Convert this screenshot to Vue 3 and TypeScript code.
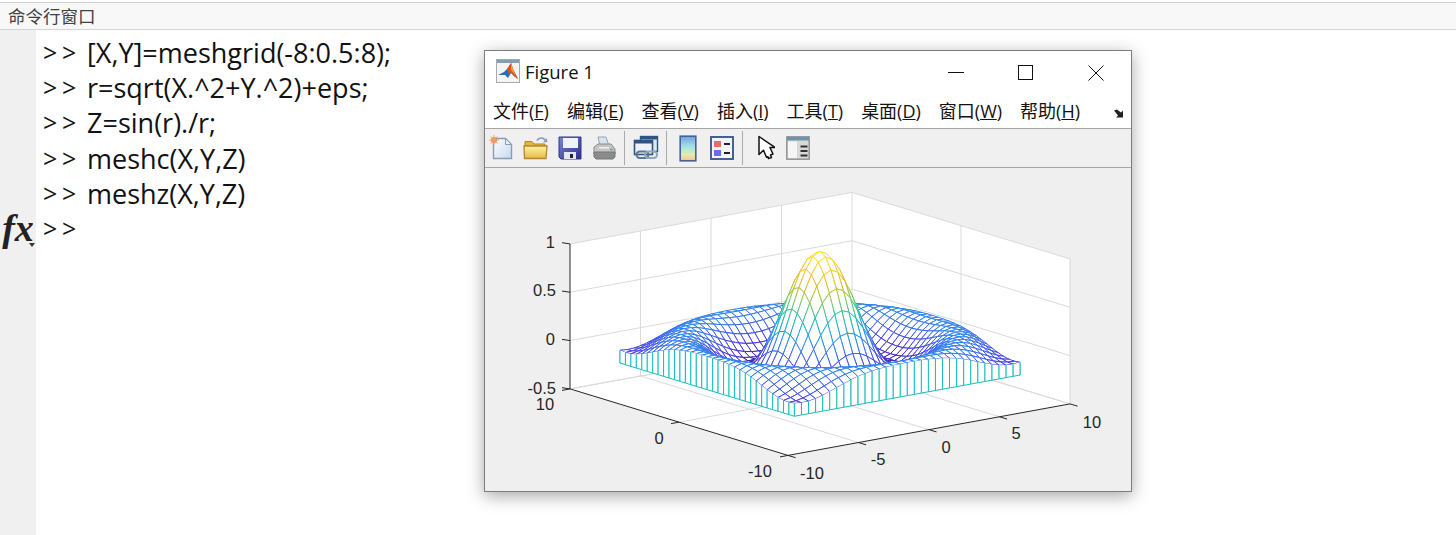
<script setup lang="ts">
type Shape = { d: string; fill: string; stroke: string };
type Pt = [number, number];

const P = (x: number, y: number, z: number): Pt => [
  788 + ((x + 10) / 20) * 282 + ((y + 10) / 20) * -218,
  455.4 + ((x + 10) / 20) * -51.5 + ((y + 10) / 20) * -66.5 - ((z + 0.5) / 1.5) * 145,
];
const f2 = (p: Pt) => `${p[0].toFixed(2)} ${p[1].toFixed(2)}`;
const line = (a: Pt, b: Pt) => `M${f2(a)}L${f2(b)}`;

const stops: [number, number, number, number][] = [
  [0, 62, 38, 168],
  [0.1, 68, 56, 232],
  [0.25, 52, 118, 242],
  [0.375, 24, 165, 222],
  [0.5, 40, 192, 170],
  [0.625, 129, 204, 89],
  [0.75, 220, 189, 41],
  [0.875, 252, 200, 48],
  [1, 249, 240, 21],
];
const ZMIN = -0.2172;
function colour(z: number): string {
  const t = Math.max(0, Math.min(1, (z - ZMIN) / (1 - ZMIN)));
  for (let i = 1; i < stops.length; i++) {
    if (t <= stops[i][0]) {
      const a = stops[i - 1];
      const b = stops[i];
      const k = (t - a[0]) / (b[0] - a[0]);
      return `rgb(${Math.round(a[1] + (b[1] - a[1]) * k)},${Math.round(a[2] + (b[2] - a[2]) * k)},${Math.round(a[3] + (b[3] - a[3]) * k)})`;
    }
  }
  return "rgb(249,240,21)";
}
const Z = (x: number, y: number) => {
  const r = Math.sqrt(x * x + y * y) + 2.22e-16;
  return Math.sin(r) / r;
};

const TEAL = "rgb(22,190,190)";
const shapes: Shape[] = [];
const edge = (x1: number, y1: number, x2: number, y2: number) => {
  const z1 = Z(x1, y1);
  const z2 = Z(x2, y2);
  const n = Math.abs(z1 - z2) > 0.06 ? 4 : Math.abs(z1 - z2) > 0.02 ? 2 : 1;
  for (let i = 0; i < n; i++) {
    const a = i / n;
    const b = (i + 1) / n;
    const za = z1 + (z2 - z1) * a;
    const zb = z1 + (z2 - z1) * b;
    shapes.push({
      d: line(P(x1 + (x2 - x1) * a, y1 + (y2 - y1) * a, za), P(x1 + (x2 - x1) * b, y1 + (y2 - y1) * b, zb)),
      fill: "none",
      stroke: colour((za + zb) / 2),
    });
  }
};
const curtain = (x1: number, y1: number, x2: number, y2: number) => {
  const a = P(x1, y1, Z(x1, y1));
  const b = P(x2, y2, Z(x2, y2));
  const c = P(x2, y2, ZMIN);
  const d = P(x1, y1, ZMIN);
  shapes.push({ d: `M${f2(a)}L${f2(b)}L${f2(c)}L${f2(d)}Z`, fill: "#fff", stroke: "none" });
  shapes.push({ d: line(a, d), fill: "none", stroke: TEAL });
  shapes.push({ d: line(b, c), fill: "none", stroke: TEAL });
  shapes.push({ d: line(d, c), fill: "none", stroke: TEAL });
};
const STEP = 0.5;
for (let v = 8; v > -8; v -= STEP) {
  curtain(8, v, 8, v - STEP);
  curtain(v, 8, v - STEP, 8);
}
for (let x = 8; x > -8; x -= STEP) {
  for (let y = 8; y > -8; y -= STEP) {
    const a = P(x, y, Z(x, y));
    const b = P(x - STEP, y, Z(x - STEP, y));
    const c = P(x - STEP, y - STEP, Z(x - STEP, y - STEP));
    const d = P(x, y - STEP, Z(x, y - STEP));
    shapes.push({ d: `M${f2(a)}L${f2(b)}L${f2(c)}L${f2(d)}Z`, fill: "#fff", stroke: "none" });
    edge(x, y, x - STEP, y);
    edge(x, y, x, y - STEP);
    edge(x - STEP, y, x - STEP, y - STEP);
    edge(x, y - STEP, x - STEP, y - STEP);
  }
}
for (let v = 8; v > -8; v -= STEP) {
  curtain(-8, v, -8, v - STEP);
  curtain(v, -8, v - STEP, -8);
}

const panes: string[] = [
  [P(-10, -10, -0.5), P(10, -10, -0.5), P(10, 10, -0.5), P(-10, 10, -0.5)],
  [P(-10, 10, -0.5), P(10, 10, -0.5), P(10, 10, 1), P(-10, 10, 1)],
  [P(10, 10, -0.5), P(10, -10, -0.5), P(10, -10, 1), P(10, 10, 1)],
].map((q) => q.map(f2).join(" "));

const gridLines: string[] = [];
for (const z of [-0.5, 0, 0.5, 1]) {
  gridLines.push(line(P(-10, 10, z), P(10, 10, z)));
  gridLines.push(line(P(10, 10, z), P(10, -10, z)));
}
for (const x of [-5, 0, 5, 10]) {
  gridLines.push(line(P(x, 10, -0.5), P(x, 10, 1)));
  gridLines.push(line(P(x, -10, -0.5), P(x, 10, -0.5)));
}
gridLines.push(line(P(10, 0, -0.5), P(10, 0, 1)));
gridLines.push(line(P(-10, 0, -0.5), P(10, 0, -0.5)));
gridLines.push(line(P(-10, 10, -0.5), P(10, 10, -0.5)));
gridLines.push(line(P(10, -10, -0.5), P(10, -10, 1)));

const axisLines: string[] = [
  line(P(-10, 10, -0.5), P(-10, 10, 1)),
  line(P(-10, 10, -0.5), P(-10, -10, -0.5)),
  line(P(-10, -10, -0.5), P(10, -10, -0.5)),
];
for (const z of [-0.5, 0, 0.5, 1]) {
  const p = P(-10, 10, z);
  axisLines.push(line(p, [p[0] - 8, p[1] - 1.2]));
}
for (const x of [-10, -5, 0, 5, 10]) {
  const p = P(x, -10, -0.5);
  axisLines.push(line(p, [p[0] + 7.6, p[1] + 2.3]));
}
for (const y of [-10, 0, 10]) {
  const p = P(-10, y, -0.5);
  axisLines.push(line(p, [p[0] - 8, p[1] + 1.5]));
}

const labels = [
  { t: "1", x: 555, y: 248, a: "end" },
  { t: "0.5", x: 556, y: 296, a: "end" },
  { t: "0", x: 555, y: 345, a: "end" },
  { t: "-0.5", x: 556, y: 394, a: "end" },
  { t: "10", x: 545, y: 410, a: "middle" },
  { t: "0", x: 659, y: 444, a: "middle" },
  { t: "-10", x: 760, y: 477, a: "middle" },
  { t: "-10", x: 812, y: 479, a: "middle" },
  { t: "-5", x: 878, y: 465, a: "middle" },
  { t: "0", x: 946, y: 453, a: "middle" },
  { t: "5", x: 1016, y: 439, a: "middle" },
  { t: "10", x: 1092, y: 428, a: "middle" },
];

const commands = [
  "[X,Y]=meshgrid(-8:0.5:8);",
  "r=sqrt(X.^2+Y.^2)+eps;",
  "Z=sin(r)./r;",
  "meshc(X,Y,Z)",
  "meshz(X,Y,Z)",
  "",
];
const menus = [
  { n: "文件", k: "F" },
  { n: "编辑", k: "E" },
  { n: "查看", k: "V" },
  { n: "插入", k: "I" },
  { n: "工具", k: "T" },
  { n: "桌面", k: "D" },
  { n: "窗口", k: "W" },
  { n: "帮助", k: "H" },
];
</script>

<template>
  <div class="page">
    <header class="cmd-title">命令行窗口</header>
    <main class="cmd-body">
      <aside class="gutter">
        <span class="fx">fx</span>
        <span class="fx-caret"></span>
      </aside>
      <section class="console">
        <div v-for="(c, i) in commands" :key="i" class="cmd-line">
          <span class="prompt"><span>&gt;</span><span>&gt;</span></span>
          <span class="code">{{ c }}</span>
        </div>
      </section>
    </main>

    <div class="figure-window">
      <div class="titlebar">
        <svg class="app-icon" width="24" height="24" viewBox="0 0 24 24">
          <rect x="0.5" y="0.5" width="23" height="23" fill="#f4f4f4" stroke="#a9a9a9" />
          <rect x="1" y="1" width="22" height="3" fill="#7d9fb8" />
          <path d="M2 16l6-3 4-4 3-5 2 6 5 10-4-3-3-3-3 5-3-3z" fill="#2a6fb5" />
          <path d="M11 10l4-6 2 6 5 10-4-3-3-4-2 3z" fill="#d9541e" />
          <path d="M15 4l2 6 3 7-5-6z" fill="#f0a030" />
        </svg>
        <span class="fig-name">Figure 1</span>
        <div class="win-controls">
          <svg class="wc" width="46" height="40" viewBox="0 0 46 40"><path d="M16 21.500h16" stroke="#111" fill="none" /></svg>
          <svg class="wc" width="46" height="40" viewBox="0 0 46 40"><rect x="15.500" y="14.500" width="14" height="14" stroke="#111" fill="none" /></svg>
          <svg class="wc" width="46" height="40" viewBox="0 0 46 40"><path d="M14.500 14.500l15 15M29.500 14.500l-15 15" stroke="#111" fill="none" /></svg>
        </div>
      </div>
      <nav class="menubar">
        <span v-for="m in menus" :key="m.k" class="menu-item">{{ m.n }}(<u>{{ m.k }}</u>)</span>
        <svg class="menu-more" width="12" height="10" viewBox="0 0 12 10">
          <path d="M1 1.500l3-1 4 3 2-2v7H3l2-2z" fill="#222" />
        </svg>
      </nav>
      <div class="toolbar">
        <button class="tool" type="button" aria-label="new">
          <svg width="26" height="26" viewBox="0 0 26 26">
            <defs>
              <linearGradient id="pg" x1="0" y1="0" x2="1" y2="1"><stop offset="0" stop-color="#fff" /><stop offset="1" stop-color="#c5d9ee" /></linearGradient>
            </defs>
            <path d="M4.500 3.500h12l6 6v14h-18z" fill="url(#pg)" stroke="#8b9cb8" stroke-width="1.400" />
            <path d="M16.500 3.500v6h6z" fill="#e8eef6" stroke="#8b9cb8" />
            <circle cx="5" cy="5" r="3" fill="#ee8a4a" />
            <path d="M5 0v10M0 5h10M1.500 1.500l7 7M8.500 1.500l-7 7" stroke="#f2a26a" stroke-width="1" />
          </svg>
        </button>
        <button class="tool" type="button" aria-label="open">
          <svg width="26" height="26" viewBox="0 0 26 26">
            <defs>
              <linearGradient id="fo" x1="0" y1="0" x2="0" y2="1"><stop offset="0" stop-color="#fff3a8" /><stop offset="1" stop-color="#e8b93e" /></linearGradient>
            </defs>
            <path d="M2 9V6.500h7l2 2.500h11v3H2z" fill="#e2b63c" stroke="#b3872a" />
            <path d="M1.500 23.500L1 11h23l-1 12.500z" fill="url(#fo)" stroke="#b3872a" stroke-width="1.300" />
            <path d="M14 5.500c2-3 6-3.500 8-.5" fill="none" stroke="#7f9ab8" stroke-width="1.600" />
            <path d="M20 7.500l4.500-.5-1-4z" fill="#7f9ab8" />
          </svg>
        </button>
        <button class="tool" type="button" aria-label="save">
          <svg width="26" height="26" viewBox="0 0 26 26">
            <defs>
              <linearGradient id="fl" x1="0" y1="0" x2="1" y2="1"><stop offset="0" stop-color="#7b84d8" /><stop offset="1" stop-color="#2c2f8c" /></linearGradient>
            </defs>
            <path d="M2 2h22v22H4l-2-2z" fill="url(#fl)" stroke="#30358a" />
            <rect x="6" y="3" width="15" height="10" fill="#eef2fa" />
            <rect x="7" y="17" width="12" height="7" fill="#e4e6f0" />
            <rect x="13" y="19" width="3" height="4" fill="#222" />
          </svg>
        </button>
        <button class="tool" type="button" aria-label="print">
          <svg width="26" height="26" viewBox="0 0 26 26">
            <path d="M7 2h8l3 9H9z" fill="#d6e4f2" stroke="#9aa4ad" />
            <path d="M3 12l4-3h13l4 5v5H3z" fill="#c4c4c4" stroke="#8a8a8a" />
            <path d="M3 17h21v5l-2 2H5l-2-2z" fill="#8c8c8c" stroke="#777" />
            <path d="M8 12h10v1.500H8z" fill="#efefef" />
            <path d="M19 14.500h3" stroke="#69b06a" stroke-width="1.400" />
          </svg>
        </button>
        <i class="tool-sep"></i>
        <button class="tool" type="button" aria-label="link">
          <svg width="26" height="26" viewBox="0 0 26 26">
            <rect x="7.500" y="1.500" width="17" height="15" fill="#dfe7f2" stroke="#2e5486" stroke-width="1.400" />
            <rect x="7.500" y="1.500" width="17" height="3" fill="#2e5486" />
            <rect x="1.500" y="5.500" width="18" height="14" fill="#eef2f8" stroke="#2e5486" stroke-width="1.600" />
            <rect x="1.500" y="5.500" width="18" height="3" fill="#2e5486" />
            <rect x="3.500" y="16.500" width="12" height="6.500" rx="3.200" fill="none" stroke="#5a7690" stroke-width="2" />
            <rect x="12" y="16.500" width="12" height="6.500" rx="3.200" fill="none" stroke="#8ea6bc" stroke-width="2" />
          </svg>
        </button>
        <i class="tool-sep"></i>
        <button class="tool" type="button" aria-label="colorbar">
          <svg width="18" height="27" viewBox="0 0 18 27">
            <defs>
              <linearGradient id="cb" x1="0" y1="0" x2="0" y2="1"><stop offset="0" stop-color="#6f9fe4" /><stop offset="0.4" stop-color="#9fe0e4" /><stop offset="0.75" stop-color="#e2ecb4" /><stop offset="1" stop-color="#f4c48c" /></linearGradient>
            </defs>
            <rect x="1.200" y="1.200" width="15.600" height="24.600" fill="url(#cb)" stroke="#4a6090" stroke-width="1.600" />
          </svg>
        </button>
        <button class="tool" type="button" aria-label="legend">
          <svg width="24" height="24" viewBox="0 0 24 24">
            <rect x="1" y="1" width="22" height="22" fill="#f2f4f8" stroke="#33508a" stroke-width="1.800" />
            <rect x="4" y="5" width="7" height="6" fill="#ec6a6a" />
            <rect x="4" y="14" width="7" height="6" fill="#6a6ee6" />
            <path d="M14 8h6M14 17h6" stroke="#222" stroke-width="2" />
          </svg>
        </button>
        <i class="tool-sep sep-wide"></i>
        <button class="tool tool-narrow" type="button" aria-label="pointer">
          <svg width="18" height="26" viewBox="0 0 18 26">
            <path d="M2 1.500v18l4.500-4.200 3 7 1.500-.6.500 1.800 3-1-1-2.500 2.500-1-3-6.500h5z" fill="#fff" stroke="#111" stroke-width="1.500" stroke-linejoin="round" />
          </svg>
        </button>
        <button class="tool tool-narrow" type="button" aria-label="panel">
          <svg width="24" height="24" viewBox="0 0 24 24">
            <rect x="0.800" y="0.800" width="22.400" height="22.400" fill="#d8d8d8" stroke="#8a8a8a" stroke-width="1.300" />
            <rect x="1" y="1" width="22" height="3.500" fill="#6f92ad" />
            <rect x="2" y="5.500" width="9" height="16.500" fill="#f6f6f6" />
            <path d="M14.500 10.500h7M14.500 15h7M14.500 19.500h7" stroke="#333" stroke-width="2" />
          </svg>
        </button>
      </div>
      <div class="figure-area">
        <svg class="plot" width="646" height="323" viewBox="485 168 646 323">
          <polygon v-for="(p, i) in panes" :key="'p' + i" :points="p" fill="#fff" />
          <path v-for="(d, i) in gridLines" :key="'g' + i" :d="d" stroke="#dadada" stroke-width="1" fill="none" />
          <path v-for="(s, i) in shapes" :key="'s' + i" :d="s.d" :fill="s.fill" :stroke="s.stroke" stroke-width="1" />
          <path v-for="(d, i) in axisLines" :key="'a' + i" :d="d" stroke="#262626" stroke-width="1" fill="none" />
          <text v-for="(l, i) in labels" :key="'t' + i" :x="l.x" :y="l.y" :text-anchor="l.a" class="tick">{{ l.t }}</text>
        </svg>
      </div>
    </div>
  </div>
</template>

<style scoped>
.page {
  position: relative;
  width: 1456px;
  height: 535px;
  overflow: hidden;
  background: #fff;
  display: flex;
  flex-direction: column;
  font-family: "Noto Sans CJK SC", sans-serif;
}
.cmd-title {
  box-sizing: border-box;
  height: 28px;
  margin-top: 2px;
  border-top: 1px solid #d0d0d0;
  border-bottom: 1px solid #d4d4d4;
  background: #f8f8f8;
  padding-left: 8px;
  font-size: 17.5px;
  line-height: 26px;
  color: #404040;
  flex: none;
}
.cmd-body {
  flex: 1;
  display: flex;
  min-height: 0;
}
.gutter {
  width: 36px;
  flex: none;
  background: #f0f0f0;
  position: relative;
  padding-top: 176px;
  text-align: center;
}
.fx {
  display: block;
  font-family: "Liberation Serif", serif;
  font-weight: 700;
  font-style: italic;
  font-size: 38px;
  line-height: 44px;
  color: #222;
}
.fx-caret {
  position: absolute;
  left: 29px;
  top: 213px;
  border-left: 3px solid transparent;
  border-right: 3px solid transparent;
  border-top: 4px solid #333;
}
.console {
  padding: 5px 0 0 7px;
  font-family: "Open Sans", sans-serif;
  font-size: 27px;
  color: #111;
}
.cmd-line {
  display: flex;
  height: 35.2px;
  line-height: 35.2px;
}
.prompt {
  width: 44px;
  flex: none;
  display: flex;
}
.prompt span {
  width: 19px;
  font-size: 25px;
}
.figure-window {
  position: absolute;
  left: 484px;
  top: 50px;
  box-sizing: border-box;
  width: 648px;
  height: 442px;
  border: 1px solid #7c7c7c;
  background: #fff;
  box-shadow: 0 4px 16px rgba(0, 0, 0, 0.35);
  display: flex;
  flex-direction: column;
}
.titlebar {
  height: 40px;
  display: flex;
  align-items: center;
  flex: none;
}
.app-icon {
  margin-left: 11px;
  margin-right: 5px;
}
.fig-name {
  font-family: "Open Sans", sans-serif;
  font-size: 18.5px;
  color: #111;
  padding-top: 1px;
}
.win-controls {
  margin-left: auto;
  margin-right: 11px;
  display: flex;
  gap: 25px;
}
.wc {
  display: block;
}
.menubar {
  height: 37px;
  box-sizing: border-box;
  flex: none;
  display: flex;
  align-items: center;
  padding-left: 8px;
  gap: 18px;
  font-family: "Open Sans", "Noto Sans CJK SC", sans-serif;
  font-size: 18px;
  color: #111;
  position: relative;
  padding-top: 1px;
}
.menu-item {
  white-space: nowrap;
}
.menu-more {
  position: absolute;
  left: 628px;
  top: 18px;
}
.toolbar {
  box-sizing: border-box;
  height: 40px;
  flex: none;
  display: flex;
  align-items: center;
  background: #f0f0f0;
  border-top: 1px solid #a6a6a6;
  border-bottom: 1px solid #a6a6a6;
}
.tool {
  width: 34px;
  height: 30px;
  padding: 0;
  border: 0;
  background: none;
  display: flex;
  align-items: center;
  justify-content: center;
  flex: none;
}
.tool-narrow {
  width: 32px;
}
.tool-sep {
  width: 1px;
  height: 34px;
  background: #aaa;
  margin: 0 4px 0 3px;
  flex: none;
}
.sep-wide {
  margin-right: 7px;
}
.figure-area {
  flex: 1;
  min-height: 0;
  background: #efefef;
}
.plot {
  display: block;
}
.tick {
  font-family: "Liberation Sans", sans-serif;
  font-size: 16.5px;
  fill: #262626;
}
</style>

<style>
html,
body {
  margin: 0;
  background: #fff;
  overflow: hidden;
}
</style>
